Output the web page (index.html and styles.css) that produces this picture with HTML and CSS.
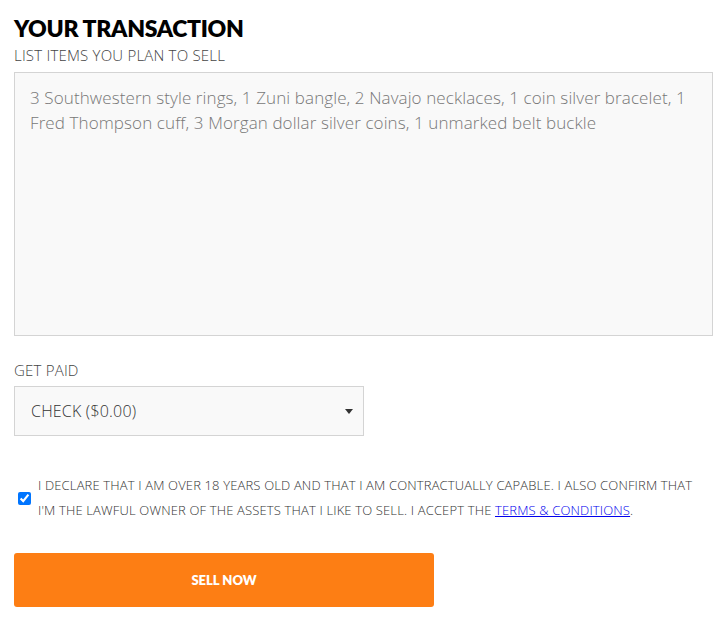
FILE: index.html
```html
<!DOCTYPE html>
<html>
<head>
<meta charset="utf-8">
<link rel="stylesheet" href="styles.css">
</head>
<body>
<form class="form">
  <h1 class="title">YOUR TRANSACTION</h1>
  <label class="label" for="items">LIST ITEMS YOU PLAN TO SELL</label>
  <textarea id="items" class="items">3 Southwestern style rings, 1 Zuni bangle, 2 Navajo necklaces, 1 coin silver bracelet, 1 Fred Thompson cuff, 3 Morgan dollar silver coins, 1 unmarked belt buckle</textarea>
  <label class="label paid" for="pay">GET PAID</label>
  <div class="select" id="pay">
    <span class="select-value">CHECK ($0.00)</span>
    <span class="caret"></span>
  </div>
  <div class="agree">
    <input type="checkbox" class="check" checked>
    <p class="agree-text">I DECLARE THAT I AM OVER 18 YEARS OLD AND THAT I AM CONTRACTUALLY CAPABLE. I ALSO CONFIRM THAT I'M THE LAWFUL OWNER OF THE ASSETS THAT I LIKE TO SELL. I ACCEPT THE <a href="#" class="terms">TERMS &amp; CONDITIONS</a>.</p>
  </div>
  <button type="button" class="sell">SELL NOW</button>
</form>
</body>
</html>
```
FILE: styles.css
```css
html, body {
  margin: 0;
  padding: 0;
  background: #fff;
}
body {
  font-family: "Open Sans", "Noto Sans", sans-serif;
}
.form {
  display: flex;
  flex-direction: column;
  align-items: flex-start;
  padding: 14px 14px 0 14px;
}
.title {
  margin: 0;
  font-family: "Lato", sans-serif;
  font-weight: 800;
  font-size: 23px;
  line-height: 28px;
  color: #000;
  letter-spacing: -0.3px;
}
.label {
  margin-top: 3px;
  font-size: 15px;
  line-height: 20px;
  font-weight: 300;
  color: #444;
  letter-spacing: 0.2px;
}
.items {
  box-sizing: border-box;
  margin-top: 7px;
  width: 699px;
  height: 264px;
  resize: none;
  background: #f9f9f9;
  border: 1px solid #d4d4d4;
  padding: 12px 15px;
  font-family: "Open Sans", sans-serif;
  font-weight: 300;
  font-size: 17px;
  line-height: 25px;
  color: #777;
  letter-spacing: 0.1px;
}
.paid {
  margin-top: 24px;
}
.select {
  box-sizing: border-box;
  margin-top: 6px;
  width: 350px;
  height: 50px;
  border: 1px solid #d4d4d4;
  background: #f9f9f9;
  display: flex;
  align-items: center;
  justify-content: space-between;
  padding: 0 9px 0 16px;
}
.select-value {
  font-size: 16px;
  font-weight: 300;
  color: #333;
  letter-spacing: 0.2px;
}
.caret {
  width: 0;
  height: 0;
  border-left: 4px solid transparent;
  border-right: 4px solid transparent;
  border-top: 5px solid #333;
  margin-right: 1px;
}
.agree {
  margin-top: 37px;
  display: flex;
  align-items: center;
  gap: 7px;
  width: 699px;
}
.check {
  margin: 0 0 0 4px;
  width: 13px;
  height: 13px;
  accent-color: #0075ff;
  flex: none;
}
.agree-text {
  margin: 0;
  font-size: 13px;
  font-weight: 300;
  line-height: 25px;
  color: #333;
  letter-spacing: 0.15px;
}
.terms {
  color: #0000ee;
  text-decoration: underline;
}
.sell {
  margin-top: 30px;
  width: 420px;
  height: 54px;
  border: none;
  border-radius: 3px;
  background: #fd7e14;
  color: #fff;
  font-family: "Lato", sans-serif;
  font-weight: 800;
  font-size: 13px;
  cursor: pointer;
}
```
